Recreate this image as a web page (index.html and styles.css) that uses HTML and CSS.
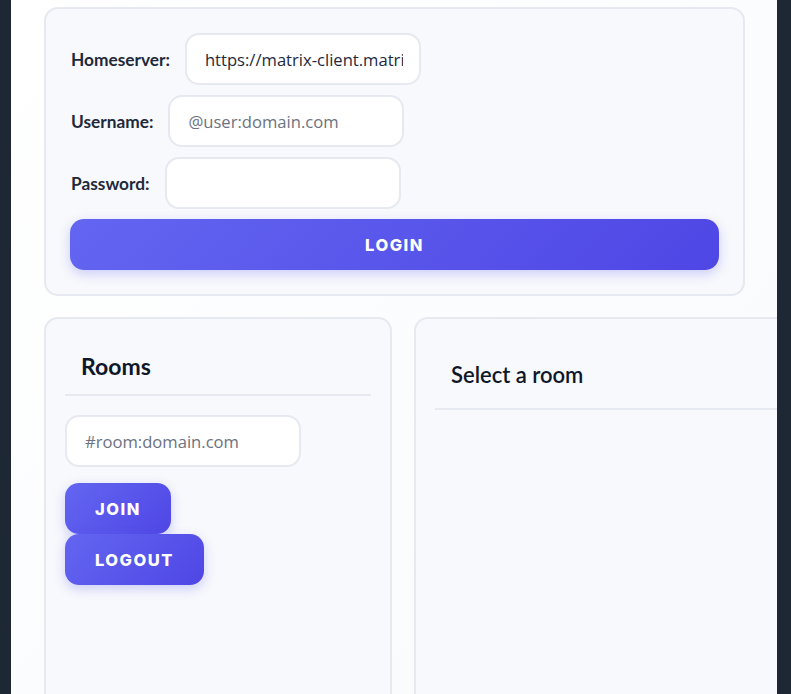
FILE: index.html
```html
<!DOCTYPE html>
<html lang="en">
<head>
<meta charset="utf-8">
<title>Matrix Client</title>
<link rel="stylesheet" href="styles.css">
</head>
<body>
<div class="app">
  <section class="card login-card">
    <div class="form-row">
      <label class="field-label" for="hs">Homeserver:</label>
      <input class="text-input" id="hs" type="text" value="https://matrix-client.matrix.org">
    </div>
    <div class="form-row">
      <label class="field-label" for="user">Username:</label>
      <input class="text-input" id="user" type="text" placeholder="@user:domain.com">
    </div>
    <div class="form-row">
      <label class="field-label" for="pass">Password:</label>
      <input class="text-input" id="pass" type="password">
    </div>
    <button class="btn btn-wide">Login</button>
  </section>

  <div class="main">
    <aside class="card rooms-card">
      <h2 class="rooms-title">Rooms</h2>
      <input class="text-input room-input" type="text" placeholder="#room:domain.com">
      <div class="room-actions">
        <button class="btn">Join</button>
        <button class="btn">Logout</button>
      </div>
    </aside>
    <section class="card chat-card">
      <h2 class="chat-title">Select a room</h2>
    </section>
  </div>
</div>
</body>
</html>
```

FILE: styles.css
```css
* { box-sizing: border-box; }

html, body {
  margin: 0;
  height: 100%;
}

body {
  background: #1e2734;
  font-family: "Lato", "Noto Sans", sans-serif;
  color: #1e293b;
  overflow: hidden;
}

.app {
  margin-left: 11px;
  width: 766px;
  height: 694px;
  padding: 7px 32px 0 33px;
  background: linear-gradient(135deg, #ffffff 0%, #f8fafc 100%);
  overflow: hidden;
}

.card {
  background: #f8f9fc;
  border: 2px solid #e6e9f0;
  border-radius: 14px;
}

.login-card {
  width: 701px;
  padding: 24px 24px 24px 25px;
}

.form-row {
  display: flex;
  align-items: center;
  gap: 15px;
  margin-bottom: 10px;
}

.field-label {
  font-family: "Lato", sans-serif;
  font-weight: 700;
  font-size: 17.3px;
  color: #1e293b;
}

.text-input {
  width: 236px;
  height: 52px;
  padding: 0 16px 0 18px;
  border: 2px solid #e6e9f0;
  border-radius: 14px;
  background: #ffffff;
  font-family: "Open Sans", sans-serif;
  font-size: 16.6px;
  color: #1e293b;
  outline: none;
}

.text-input::placeholder {
  color: #6b7280;
}

.btn {
  height: 51px;
  padding: 0 30px;
  border: none;
  border-radius: 14px;
  background: linear-gradient(135deg, #6366f1 0%, #4f46e5 100%);
  box-shadow: 0 4px 12px rgba(99, 102, 241, 0.3);
  color: #ffffff;
  font-family: "Inter", sans-serif;
  font-weight: 800;
  font-size: 16.5px;
  letter-spacing: 1.5px;
  text-transform: uppercase;
  cursor: pointer;
}

.btn-wide {
  display: block;
  width: 649px;
  margin-left: -1px;
}

.main {
  display: flex;
  gap: 22px;
  margin-top: 21px;
  height: 420px;
}

.rooms-card {
  flex: 0 0 348px;
  padding: 20px 19px;
}

.rooms-title {
  margin: 0;
  padding: 13px 16px 13px;
  font-family: "Lato", sans-serif;
  font-size: 23px;
  line-height: 29px;
  font-weight: 700;
  color: #0f172a;
  border-bottom: 2px solid #e6e9f0;
}

.room-input {
  margin-top: 19px;
}

.room-actions {
  display: flex;
  flex-direction: column;
  align-items: flex-start;
  margin-top: 16px;
}

.chat-card {
  flex: 0 0 420px;
  padding: 20px 19px;
}

.chat-title {
  margin: 0;
  padding: 22px 16px 19px;
  font-family: "Lato", sans-serif;
  font-size: 22px;
  line-height: 28px;
  font-weight: 600;
  color: #0f172a;
  border-bottom: 2px solid #e6e9f0;
}
```
